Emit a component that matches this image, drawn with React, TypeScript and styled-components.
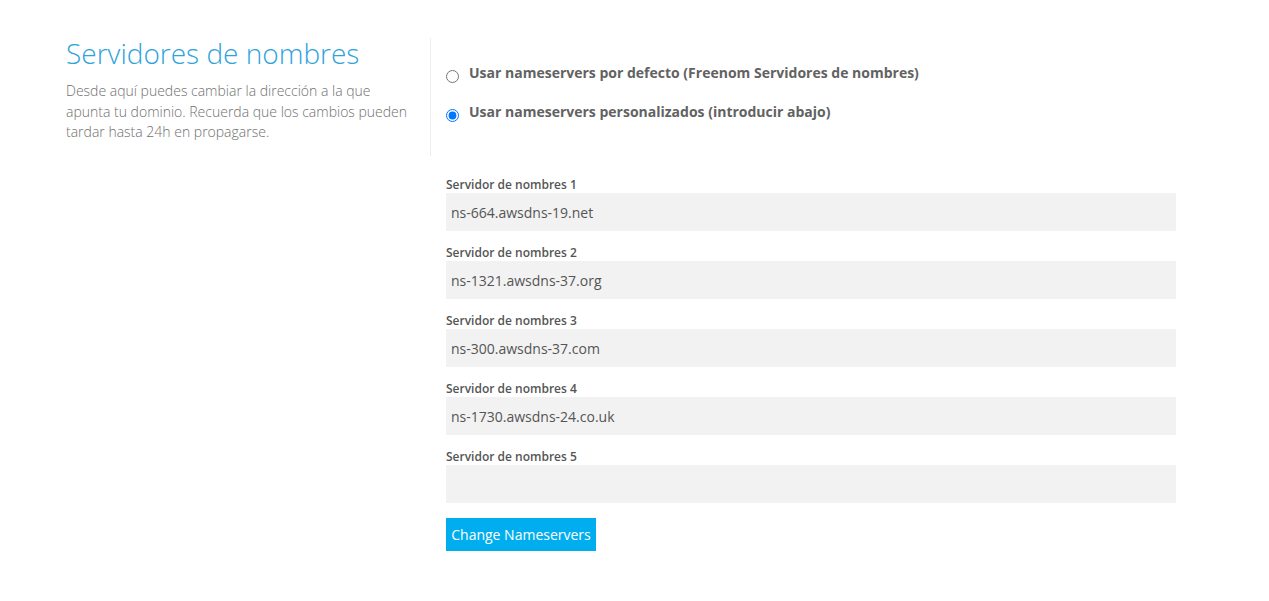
import React from "react";
import styled, { createGlobalStyle } from "styled-components";

const GlobalStyle = createGlobalStyle`
  html, body { margin: 0; padding: 0; background: #fff; }
  body { font-family: "Open Sans", "Liberation Sans", sans-serif; }
  * { box-sizing: border-box; }
`;

const Page = styled.div`
  padding: 38px 0 40px 66px;
`;

const TopRow = styled.div`
  display: flex;
  align-items: stretch;
`;

const Intro = styled.div`
  width: 364px;
  padding-right: 14px;
`;

const Title = styled.h1`
  margin: 0;
  font-size: 28px;
  line-height: 30px;
  font-weight: 300;
  color: #2ea3dc;
`;

const Description = styled.p`
  margin: 13px 0 0;
  font-size: 14px;
  line-height: 20.5px;
  font-weight: 300;
  color: #6f6f6f;
`;

const Options = styled.div`
  border-left: 1px solid #eeeeee;
  padding: 25px 0 34px 15px;
  display: flex;
  flex-direction: column;
  gap: 19px;
`;

const OptionRow = styled.label`
  display: flex;
  align-items: flex-start;
  gap: 10px;
  cursor: pointer;
`;

const Radio = styled.input`
  width: 13px;
  height: 13px;
  margin: 7px 0 0 0;
  flex: none;
`;

const OptionText = styled.span`
  font-size: 14px;
  line-height: 20px;
  font-weight: 700;
  color: #626262;
`;

const Fields = styled.form`
  margin: 20px 0 0 380px;
  width: 730px;
  display: flex;
  flex-direction: column;
`;

const FieldGroup = styled.div`
  display: flex;
  flex-direction: column;
  margin-bottom: 13px;
`;

const FieldLabel = styled.label`
  font-size: 12px;
  line-height: 16px;
  padding-top: 1px;
  font-weight: 600;
  color: #555;
`;

const TextInput = styled.input`
  height: 38px;
  width: 100%;
  border: none;
  outline: none;
  background: #f2f2f2;
  padding: 0 5px;
  font-family: "Open Sans", "Liberation Sans", sans-serif;
  font-size: 14px;
  color: #555;
`;

const Button = styled.button`
  align-self: flex-start;
  margin-top: 2px;
  height: 33px;
  width: 150px;
  border: none;
  background: #00aeef;
  color: #fff;
  font-family: "Open Sans", "Liberation Sans", sans-serif;
  font-size: 14px;
  font-weight: 400;
  padding: 0;
  cursor: pointer;
`;

const nameservers = [
  "ns-664.awsdns-19.net",
  "ns-1321.awsdns-37.org",
  "ns-300.awsdns-37.com",
  "ns-1730.awsdns-24.co.uk",
  "",
];

export default function App() {
  return (
    <>
      <GlobalStyle />
      <Page>
        <TopRow>
          <Intro>
            <Title>Servidores de nombres</Title>
            <Description>
              Desde aquí puedes cambiar la dirección a la que apunta tu dominio. Recuerda que los
              cambios pueden tardar hasta 24h en propagarse.
            </Description>
          </Intro>
          <Options>
            <OptionRow>
              <Radio type="radio" name="nsmode" value="default" />
              <OptionText>Usar nameservers por defecto (Freenom Servidores de nombres)</OptionText>
            </OptionRow>
            <OptionRow>
              <Radio type="radio" name="nsmode" value="custom" defaultChecked />
              <OptionText>Usar nameservers personalizados (introducir abajo)</OptionText>
            </OptionRow>
          </Options>
        </TopRow>
        <Fields onSubmit={(e) => e.preventDefault()}>
          {nameservers.map((ns, i) => (
            <FieldGroup key={i}>
              <FieldLabel htmlFor={`ns${i + 1}`}>Servidor de nombres {i + 1}</FieldLabel>
              <TextInput id={`ns${i + 1}`} type="text" defaultValue={ns} />
            </FieldGroup>
          ))}
          <Button type="submit">Change Nameservers</Button>
        </Fields>
      </Page>
    </>
  );
}
